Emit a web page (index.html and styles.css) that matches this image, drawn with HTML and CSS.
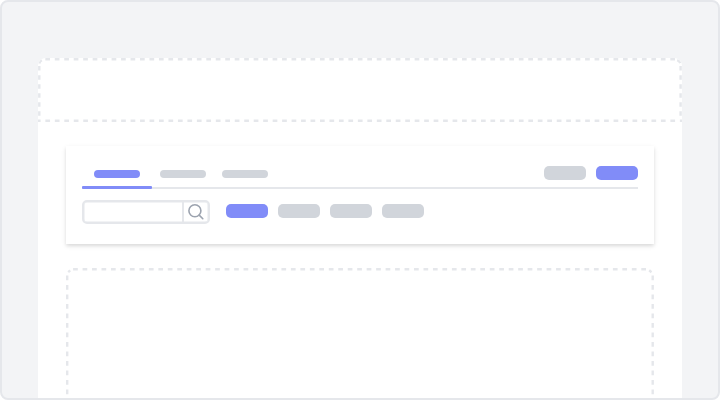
FILE: index.html
```html
<!DOCTYPE html>
<html lang="en">
<head>
<meta charset="utf-8">
<title>Page layout</title>
<link rel="stylesheet" href="styles.css">
</head>
<body>
<div class="frame">
  <main class="page">
    <svg class="header" viewBox="0 0 644 65" aria-hidden="true">
      <path class="dash" d="M7.3 1.3H637"/>
      <path class="dash side" d="M1.3 8.1V58M642.6 8.1V58"/>
      <path class="corner" d="M1.3 5.5Q1.6 3.4 3.8 2.2M639.2 2.1Q641.7 3.1 642.3 5.2"/>
      <path class="dash" d="M-2.1 62.8H644"/>
    </svg>
    <section class="card">
      <div class="top">
        <nav class="tabs"><i class="tab active"></i><i class="tab"></i><i class="tab"></i></nav>
        <div class="actions"><i class="pill"></i><i class="pill active"></i></div>
      </div>
      <div class="filters">
        <div class="search">
          <div class="field"></div>
          <svg class="icon" viewBox="0 0 24 20"><circle cx="10.9" cy="8.8" r="6"/><path d="M15.2 13.1L18.8 16.7"/></svg>
        </div>
        <i class="pill active"></i><i class="pill"></i><i class="pill"></i><i class="pill"></i>
      </div>
    </section>
    <svg class="content" viewBox="0 0 588 130" aria-hidden="true">
      <path class="dash" d="M7.1 1.2H581"/>
      <path class="dash low" d="M1.2 7.6V130M586.7 7.6V130"/>
      <path class="corner" d="M2.2 4.1L4.2 2.3M583.2 2.3L585.5 4.2"/>
    </svg>
  </main>
</div>
</body>
</html>
```
FILE: styles.css
```css
* { box-sizing: border-box; }
body { margin: 0; background: #fff; }
.frame {
  width: 720px;
  height: 400px;
  padding: 56px 36px 0;
  overflow: hidden;
  border: 2px solid #e5e7eb;
  border-radius: 8px;
  background: #f3f4f6;
}
.page {
  width: 644px;
  height: 340px;
  overflow: hidden;
  border-radius: 8px 8px 0 0;
  background: #fff;
}
svg { display: block; fill: none; }
.header { width: 644px; height: 65px; }
.content { width: 588px; height: 130px; margin: 24px 28px 0; }
.dash { stroke: #e5e7eb; stroke-width: 2.4; stroke-dasharray: 4.7 4.77; }
.side { stroke-dasharray: 4.5 4.55; }
.low { stroke-dasharray: 4.7 4.8; }
.corner { stroke: #e5e7eb; stroke-width: 2.4; }
.card {
  height: 98px;
  margin: 23px 28px 0;
  padding: 0 16px;
  background: #fff;
  box-shadow: 0 2px 5px rgba(0, 0, 0, .1), 0 2px 3px rgba(0, 0, 0, .06);
}
.top {
  display: flex;
  justify-content: space-between;
  height: 43px;
  border-bottom: 2px solid #e5e7eb;
}
.tabs { display: flex; padding: 24px 0 0 12px; position: relative; }
.tabs::after {
  content: "";
  position: absolute;
  left: 0;
  top: 40px;
  width: 70px;
  height: 3px;
  border-radius: 1px;
  background: #818cf8;
}
.tab { width: 46px; height: 8px; margin-right: 16px; border-radius: 4px; background: #d1d5db; }
.tab.active { margin-right: 20px; }
.actions { display: flex; gap: 10px; padding-top: 20px; }
.pill { width: 42px; height: 14px; border-radius: 5px; background: #d1d5db; }
.active { background: #818cf8; }
.filters { display: flex; align-items: center; gap: 10px; padding-top: 11px; }
.search {
  display: flex;
  width: 128px;
  height: 24px;
  margin-right: 6px;
  border: 2px solid #e5e7eb;
  border-radius: 5px;
  box-shadow: inset 0 0 0 .5px #e5e7eb;
}
.field { width: 100px; border-right: 2px solid #e5e7eb; }
.icon { width: 24px; height: 20px; stroke: #9ca3af; stroke-width: 1.6; stroke-linecap: round; }
.filters .pill { position: relative; top: -1px; }
```
